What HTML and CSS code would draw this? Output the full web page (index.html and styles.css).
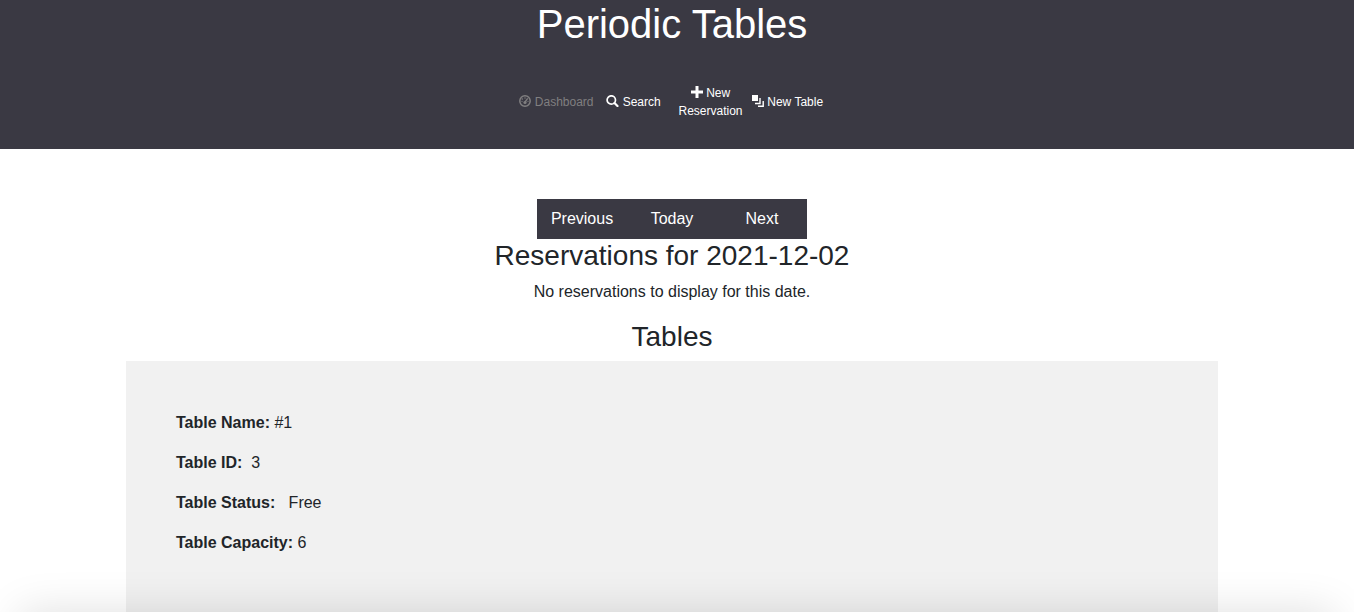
FILE: index.html
```
<!DOCTYPE html>
<html lang="en">
<head>
<meta charset="utf-8">
<title>Periodic Tables</title>
<link rel="stylesheet" href="styles.css">
</head>
<body>
<header class="header">
  <h1 class="title">Periodic Tables</h1>
  <nav class="nav">
    <a class="nav-link current" href="#dashboard"><svg class="icon" viewBox="0 0 12 12" aria-hidden="true"><circle cx="6" cy="6" r="5.200" fill="none" stroke="currentColor" stroke-width="1.500"/><circle cx="6" cy="3" r=".7" fill="currentColor"/><circle cx="3.300" cy="4" r=".8" fill="currentColor"/><circle cx="3" cy="6.300" r=".6" fill="currentColor"/><circle cx="9" cy="6.300" r=".6" fill="currentColor"/><path d="M8.700 3.300L6 7" stroke="currentColor" stroke-width="1.300"/><circle cx="6" cy="7.500" r="1.600" fill="currentColor"/></svg> Dashboard</a>
    <a class="nav-link" href="#search"><svg class="icon wide" viewBox="0 0 13 12" aria-hidden="true"><circle cx="5.300" cy="5" r="4.200" fill="none" stroke="currentColor" stroke-width="1.700"/><path d="M8.500 8l3 3" stroke="currentColor" stroke-width="2.200" stroke-linecap="round"/></svg> Search</a>
    <a class="nav-link" href="#new-reservation"><svg class="icon" viewBox="0 0 12 12" aria-hidden="true"><path d="M4.500 0h3v4.500H12v3H7.500V12h-3V7.500H0v-3h4.500z" fill="currentColor"/></svg> New Reservation</a>
    <a class="nav-link" href="#new-table"><svg class="icon" viewBox="0 0 12 12" aria-hidden="true"><path d="M0 0h6v6H0z" fill="currentColor"/><path d="M8 3v5.500H3M11.200 6v5.300H6" fill="none" stroke="currentColor" stroke-width="1.400"/></svg> New Table</a>
  </nav>
</header>
<main class="content">
  <div class="dates">
    <button class="date-button" type="button">Previous</button>
    <button class="date-button" type="button">Today</button>
    <button class="date-button" type="button">Next</button>
  </div>
  <h2 class="heading">Reservations for 2021-12-02</h2>
  <p class="line">No reservations to display for this date.</p>
  <h2 class="heading">Tables</h2>
  <section class="card">
    <p class="line"><strong>Table Name:</strong> #1</p>
    <p class="line"><strong>Table ID:</strong>&nbsp; 3</p>
    <p class="line"><strong>Table Status:</strong>&nbsp;&nbsp; Free</p>
    <p class="line"><strong>Table Capacity:</strong> 6</p>
  </section>
</main>
<div class="bottom-shadow"></div>
</body>
</html>
```
FILE: styles.css
```
* {
  box-sizing: border-box;
}

html {
  scrollbar-width: none;
}

body {
  margin: 0;
  background: #fff;
  color: #212529;
  font: 16px/24px "Liberation Sans", Arial, sans-serif;
}

.header {
  display: flex;
  flex-direction: column;
  align-items: center;
  gap: 36px;
  padding: 0 10px 29px 0;
  background: #3a3943;
  color: #fff;
}

.title {
  margin: 0;
  font-size: 40px;
  font-weight: 400;
  line-height: 48px;
}

.nav {
  display: grid;
  grid-template-columns: repeat(4, 77px);
  align-items: center;
}

.nav-link {
  color: #fff;
  font-size: 12px;
  line-height: 18px;
  text-align: center;
  text-decoration: none;
}

.nav-link.current {
  color: #807f80;
}

.icon {
  width: 12px;
  height: 12px;
  vertical-align: -1px;
}

.icon.wide {
  width: 13px;
}

.content {
  display: flex;
  flex-direction: column;
  align-items: center;
  padding: 50px 10px 50px 0;
}

.dates {
  display: grid;
  grid-template-columns: repeat(3, 90px);
}

.date-button {
  height: 40px;
  padding: 0;
  border: 0;
  background: #3a3943;
  color: #fff;
  font: inherit;
}

.heading {
  margin: 0 0 8px;
  font-size: 28px;
  font-weight: 400;
  line-height: 33px;
}

.line {
  margin: 0 0 16px;
}

.card {
  align-self: stretch;
  margin: 0 126px;
  padding: 50px;
  background: #f1f1f1;
}

.bottom-shadow {
  position: fixed;
  top: 100%;
  right: 20px;
  left: 20px;
  height: 80px;
  box-shadow: 0 0 44px rgba(0, 0, 0, 0.13);
}
```
